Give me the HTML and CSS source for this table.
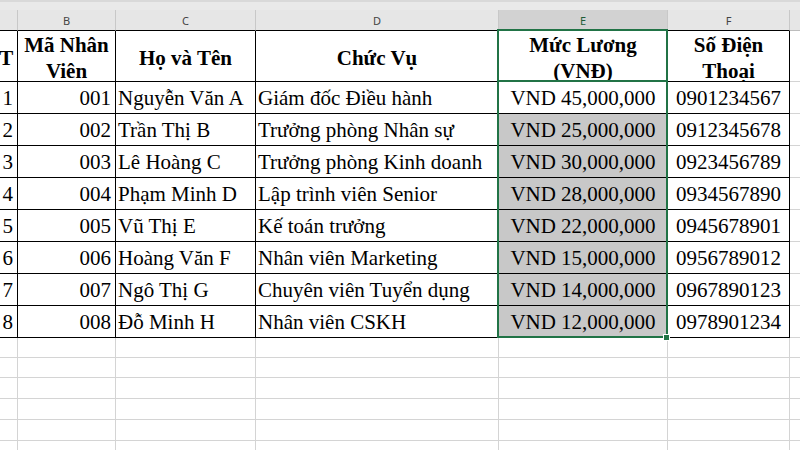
FILE: index.html
```html
<!DOCTYPE html>
<html lang="vi">
<head>
<meta charset="utf-8">
<title>Danh sách nhân viên</title>
<link rel="stylesheet" href="styles.css">
</head>
<body>
<div class="topbar"></div>
<div class="wrap">
  <div class="sheet">
    <div class="ch"></div><div class="ch">B</div><div class="ch">C</div><div class="ch">D</div><div class="ch ch-sel">E</div><div class="ch">F</div><div class="ch ch-last"></div>

    <div class="h">STT</div><div class="h">Mã Nhân Viên</div><div class="h">Họ và Tên</div><div class="h">Chức Vụ</div><div class="h">Mức Lương (VNĐ)</div><div class="h">Số Điện Thoại</div><div class="g"></div>

    <div class="d r">1</div><div class="d r">001</div><div class="d l">Nguyễn Văn A</div><div class="d l">Giám đốc Điều hành</div><div class="d m">VND 45,000,000</div><div class="d m">0901234567</div><div class="g"></div>
    <div class="d r">2</div><div class="d r">002</div><div class="d l">Trần Thị B</div><div class="d l">Trưởng phòng Nhân sự</div><div class="d m shade">VND 25,000,000</div><div class="d m">0912345678</div><div class="g"></div>
    <div class="d r">3</div><div class="d r">003</div><div class="d l">Lê Hoàng C</div><div class="d l">Trưởng phòng Kinh doanh</div><div class="d m shade">VND 30,000,000</div><div class="d m">0923456789</div><div class="g"></div>
    <div class="d r">4</div><div class="d r">004</div><div class="d l">Phạm Minh D</div><div class="d l">Lập trình viên Senior</div><div class="d m shade">VND 28,000,000</div><div class="d m">0934567890</div><div class="g"></div>
    <div class="d r">5</div><div class="d r">005</div><div class="d l">Vũ Thị E</div><div class="d l">Kế toán trưởng</div><div class="d m shade">VND 22,000,000</div><div class="d m">0945678901</div><div class="g"></div>
    <div class="d r">6</div><div class="d r">006</div><div class="d l">Hoàng Văn F</div><div class="d l">Nhân viên Marketing</div><div class="d m shade">VND 15,000,000</div><div class="d m">0956789012</div><div class="g"></div>
    <div class="d r">7</div><div class="d r">007</div><div class="d l">Ngô Thị G</div><div class="d l">Chuyên viên Tuyển dụng</div><div class="d m shade">VND 14,000,000</div><div class="d m">0967890123</div><div class="g"></div>
    <div class="d r">8</div><div class="d r">008</div><div class="d l">Đỗ Minh H</div><div class="d l">Nhân viên CSKH</div><div class="d m shade">VND 12,000,000</div><div class="d m">0978901234</div><div class="g"></div>

    <div class="e"></div><div class="e"></div><div class="e"></div><div class="e"></div><div class="e"></div><div class="e"></div><div class="e"></div>
    <div class="e"></div><div class="e"></div><div class="e"></div><div class="e"></div><div class="e"></div><div class="e"></div><div class="e"></div>
    <div class="e"></div><div class="e"></div><div class="e"></div><div class="e"></div><div class="e"></div><div class="e"></div><div class="e"></div>
    <div class="e"></div><div class="e"></div><div class="e"></div><div class="e"></div><div class="e"></div><div class="e"></div><div class="e"></div>
    <div class="e"></div><div class="e"></div><div class="e"></div><div class="e"></div><div class="e"></div><div class="e"></div><div class="e"></div>
    <div class="e"></div><div class="e"></div><div class="e"></div><div class="e"></div><div class="e"></div><div class="e"></div><div class="e"></div>
  </div>
  <div class="sel-head"></div>
  <div class="sel-range"></div>
  <div class="handle"></div>
</div>
</body>
</html>
```

FILE: styles.css
```css
* {
  box-sizing: border-box;
}

html,
body {
  margin: 0;
  height: 100%;
  overflow: hidden;
  background: #ffffff;
}

.topbar {
  height: 10px;
  background: #e9e9e9;
  border-top: 2px solid #d9d9d9;
}

.wrap {
  position: relative;
  height: 440px;
  overflow: hidden;
}

.sheet {
  display: grid;
  grid-template-columns: 48px 98px 140px 243px 169px 122px 120px;
  grid-template-rows: 21px 51px repeat(8, 32px) 20px 20px 21px 21px 21px 21px;
  margin-left: -30px;
  font-family: "Liberation Serif", "Times New Roman", serif;
  font-size: 21px;
  color: #000;
}

.ch {
  display: flex;
  align-items: center;
  justify-content: center;
  background: #e6e6e6;
  border-right: 1px solid #c8c8c8;
  border-bottom: 1px solid #000;
  font-family: "Noto Sans", "Open Sans", sans-serif;
  font-size: 11px;
  color: #444;
  padding-top: 1px;
}

.ch-sel {
  background: #d2d2d2;
  color: #1f5c38;
  border-bottom: 2px solid #217346;
}

.ch-last {
  border-bottom-color: #bdbdbd;
}

.h {
  display: flex;
  align-items: center;
  justify-content: center;
  text-align: center;
  font-weight: bold;
  line-height: 26px;
  border-right: 1px solid #000;
  border-bottom: 1px solid #000;
  overflow: hidden;
  padding: 4px 2px 0;
}

.d {
  display: flex;
  align-items: flex-end;
  line-height: 24px;
  padding: 0 3px 3px;
  white-space: nowrap;
  overflow: hidden;
  border-right: 1px solid #000;
  border-bottom: 1px solid #000;
}

.r {
  justify-content: flex-end;
  padding-right: 4px;
}

.l {
  justify-content: flex-start;
  padding-left: 2px;
}

.m {
  justify-content: center;
}

.shade {
  background: #c8c8c8;
}

.g {
  border-right: 1px solid #d4d4d4;
  border-bottom: 1px solid #d4d4d4;
}

.e {
  border-right: 1px solid #d4d4d4;
  border-bottom: 1px solid #d4d4d4;
}

.sel-head {
  position: absolute;
  left: 497px;
  top: 19px;
  width: 171px;
  height: 53px;
  border: 2px solid #217346;
}

.sel-range {
  position: absolute;
  left: 497px;
  top: 70px;
  width: 171px;
  height: 258px;
  border: 2px solid #217346;
}

.handle {
  position: absolute;
  left: 663px;
  top: 324px;
  width: 7px;
  height: 7px;
  background: #217346;
  border: 1px solid #ffffff;
}
```
